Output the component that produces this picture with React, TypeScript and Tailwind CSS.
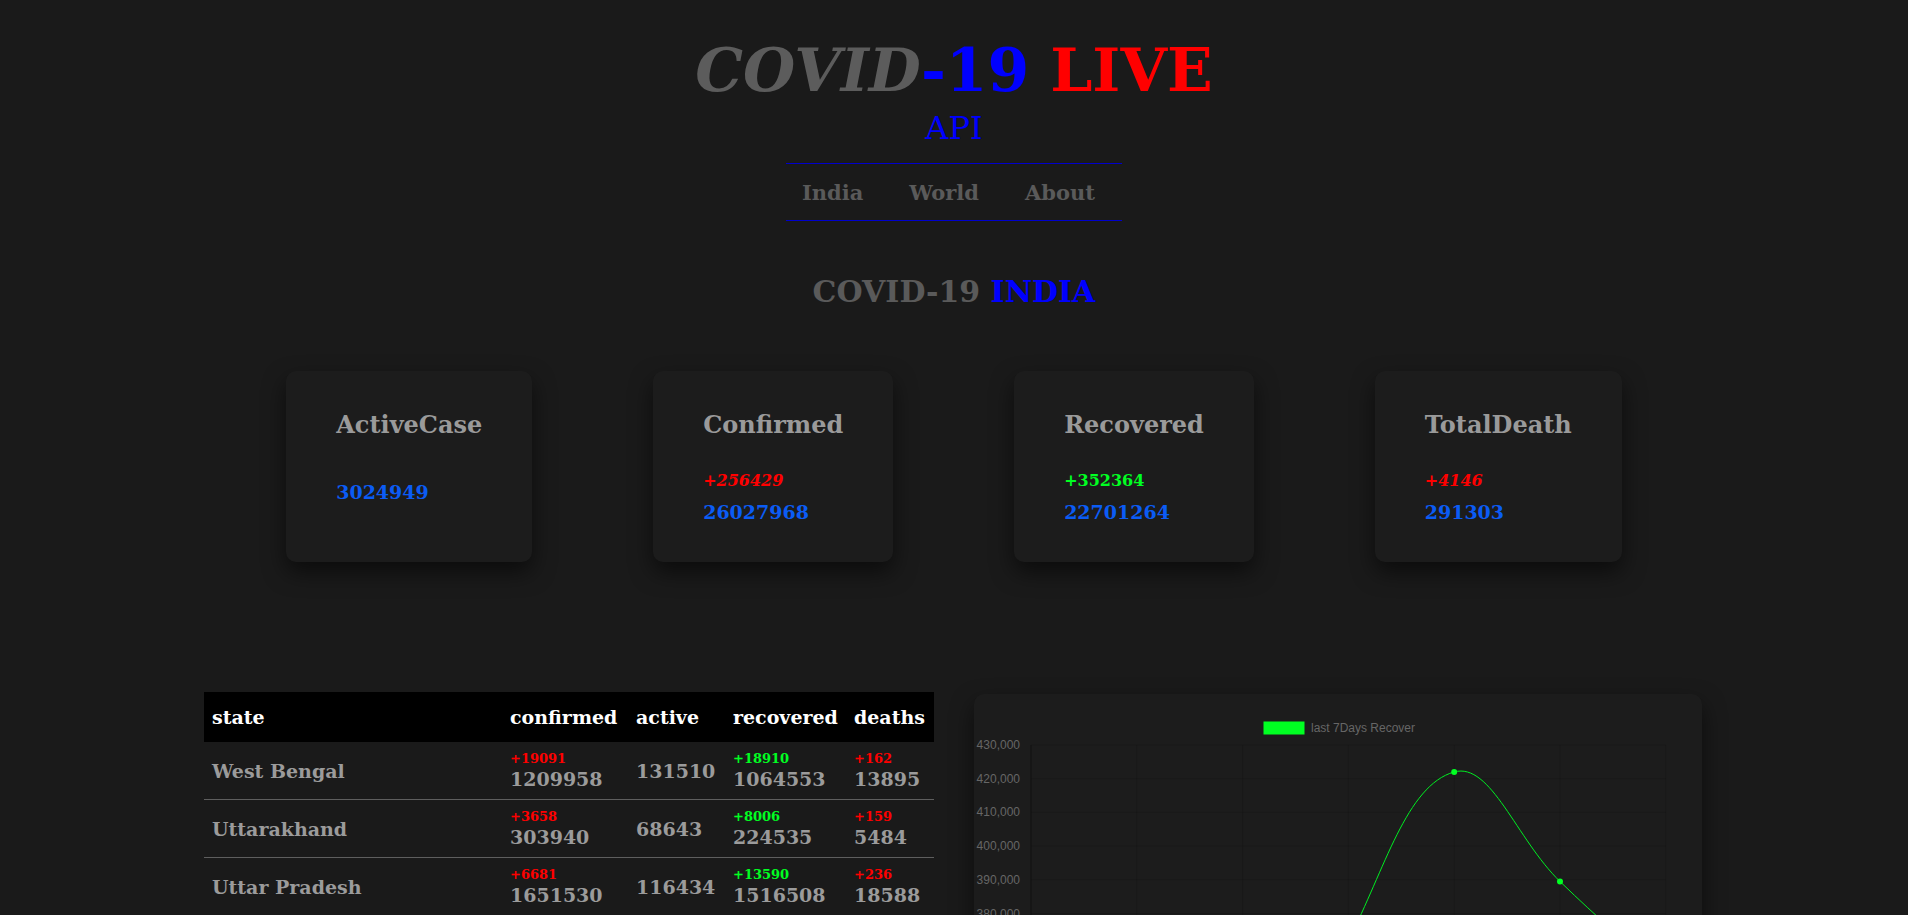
import React from "react";

const cards = [
  { title: "ActiveCase", delta: "", deltaColor: "", total: "3024949" },
  { title: "Confirmed", delta: "+256429", deltaColor: "text-[#ff0000] italic", total: "26027968" },
  { title: "Recovered", delta: "+352364", deltaColor: "text-[#00ff22]", total: "22701264" },
  { title: "TotalDeath", delta: "+4146", deltaColor: "text-[#ff0000] italic", total: "291303" },
];

const rows = [
  { state: "West Bengal", dc: "+19091", c: "1209958", a: "131510", dr: "+18910", r: "1064553", dd: "+162", d: "13895" },
  { state: "Uttarakhand", dc: "+3658", c: "303940", a: "68643", dr: "+8006", r: "224535", dd: "+159", d: "5484" },
  { state: "Uttar Pradesh", dc: "+6681", c: "1651530", a: "116434", dr: "+13590", r: "1516508", dd: "+236", d: "18588" },
  { state: "Tripura", dc: "+412", c: "48723", a: "5108", dr: "+301", r: "43091", dd: "+6", d: "524" },
];

// chart geometry (local to the chart box)
const X0 = 57;
const DX = 105.8;
const Y0 = 51;
const STEP = 33.7; // px per 10,000
const MAX = 430000;
const data = [318000, 326000, 300000, 372000, 422000, 389500, 361000];

type P = { x: number; y: number };

function toY(v: number) {
  return Y0 + ((MAX - v) / 10000) * STEP;
}

// same control point maths as chart.js (tension 0.4)
function buildPath(pts: P[], t = 0.4) {
  const ctrl = pts.map((p1, i) => {
    const p0 = pts[i - 1] ?? p1;
    const p2 = pts[i + 1] ?? p1;
    const d01 = Math.hypot(p1.x - p0.x, p1.y - p0.y);
    const d12 = Math.hypot(p2.x - p1.x, p2.y - p1.y);
    const sum = d01 + d12 || 1;
    const fa = t * (d01 / sum);
    const fb = t * (d12 / sum);
    return {
      prev: { x: p1.x - fa * (p2.x - p0.x), y: p1.y - fa * (p2.y - p0.y) },
      next: { x: p1.x + fb * (p2.x - p0.x), y: p1.y + fb * (p2.y - p0.y) },
    };
  });
  let d = `M ${pts[0].x} ${pts[0].y}`;
  for (let i = 1; i < pts.length; i++) {
    const a = ctrl[i - 1].next;
    const b = ctrl[i].prev;
    d += ` C ${a.x} ${a.y} ${b.x} ${b.y} ${pts[i].x} ${pts[i].y}`;
  }
  return d;
}

function RecoverChart() {
  const pts = data.map((v, i) => ({ x: X0 + i * DX, y: toY(v) }));
  const ticks = Array.from({ length: 14 }, (_, i) => MAX - i * 10000);
  const bottom = toY(300000);
  const days = ["17 May", "18 May", "19 May", "20 May", "21 May", "22 May", "23 May"];
  const font = "'Liberation Sans', Arial, sans-serif";
  return (
    <svg width="728" height="530" className="block">
      <rect x="290" y="28" width="40" height="12" fill="#00ff22" stroke="#00ff22" />
      <text x="337" y="38" fontSize="12" fill="#666" fontFamily={font}>
        last 7Days Recover
      </text>
      {ticks.map((v) => (
        <g key={v}>
          <line x1={X0} x2={X0 + 6 * DX} y1={toY(v)} y2={toY(v)} stroke="rgba(0,0,0,0.12)" />
          <text x="46" y={toY(v) + 4} fontSize="12" fill="#666" textAnchor="end" fontFamily={font}>
            {v.toLocaleString("en-US")}
          </text>
        </g>
      ))}
      {data.map((_, i) => (
        <g key={i}>
          <line x1={X0 + i * DX} x2={X0 + i * DX} y1={Y0} y2={bottom} stroke="rgba(0,0,0,0.12)" />
          <text x={X0 + i * DX} y={bottom + 18} fontSize="12" fill="#666" textAnchor="middle" fontFamily={font}>
            {days[i]}
          </text>
        </g>
      ))}
      <line x1={X0} x2={X0} y1={Y0} y2={bottom} stroke="rgba(0,0,0,0.25)" />
      <path d={buildPath(pts)} fill="none" stroke="#00ee22" strokeWidth="1" />
      {pts.map((p, i) => (
        <circle key={i} cx={p.x} cy={p.y} r="3" fill="#00ff22" />
      ))}
    </svg>
  );
}

export default function App() {
  return (
    <div className="min-h-screen w-full bg-[#1a1a1a] font-['DejaVu_Serif',serif] pb-20">
      {/* header */}
      <div className="flex flex-col items-center pt-[35px]">
        <h1 className="text-[60px] leading-[70px] font-bold">
          <span className="italic text-[#5c5c5c]">COVID</span>
          <span className="text-[#0000ff]">-19</span>
          <span className="text-[#ff0000]"> LIVE</span>
        </h1>
        <p className="mt-[5px] text-[32px] leading-[37px] text-[#0000ff]">API</p>

        <nav className="mt-[16px] w-[336px] border-y border-[#0000cc] pt-[16px] pb-[14px] pl-[16px]">
          <ul className="flex gap-[46px] text-[21px] leading-[26px] font-bold text-[#5a5a5a]">
            <li>India</li>
            <li>World</li>
            <li>About</li>
          </ul>
        </nav>

        <h2 className="mt-[53px] text-[30px] leading-[35px] font-bold text-[#5a5a5a]">
          COVID-19 <span className="text-[#0000ff]">INDIA</span>
        </h2>
      </div>

      {/* cards */}
      <div className="mx-auto mt-[62px] flex w-[70%] justify-between">
        {cards.map((c) => (
          <div
            key={c.title}
            className="h-[191px] rounded-[10px] bg-[#1c1c1c] px-[50px] pt-[40px] shadow-[0_10px_22px_rgba(0,0,0,0.55)]"
          >
            <h3 className="text-[24px] leading-[28px] font-bold text-[#9a9a9a]">{c.title}</h3>
            {c.delta ? (
              <>
                <p className={`mt-[32px] text-[16px] leading-[20px] font-bold ${c.deltaColor}`}>{c.delta}</p>
                <p className="mt-[9px] text-[19px] leading-[24px] font-bold text-[#0b5cf5]">{c.total}</p>
              </>
            ) : (
              <p className="mt-[41px] text-[19px] leading-[24px] font-bold text-[#0b5cf5]">{c.total}</p>
            )}
          </div>
        ))}
      </div>

      {/* table + chart */}
      <div className="mt-[130px] flex items-start justify-center gap-[40px] pr-[2px]">
        <table className="w-[730px] table-fixed border-collapse text-left">
          <colgroup>
            <col className="w-[298px]" />
            <col className="w-[126px]" />
            <col className="w-[97px]" />
            <col className="w-[121px]" />
            <col className="w-[88px]" />
          </colgroup>
          <thead>
            <tr className="bg-black text-white text-[19px] leading-[24px] font-bold">
              <th className="px-2 py-[13px] font-bold">state</th>
              <th className="px-2 py-[13px] font-bold">confirmed</th>
              <th className="px-2 py-[13px] font-bold">active</th>
              <th className="px-2 py-[13px] font-bold">recovered</th>
              <th className="px-2 py-[13px] font-bold">deaths</th>
            </tr>
          </thead>
          <tbody className="text-[#9b9b9b] font-bold">
            {rows.map((r) => (
              <tr key={r.state} className="border-b border-[#5e5e5e]">
                <td className="px-2 pt-[9px] pb-2 text-[19px] leading-[24px] align-middle">{r.state}</td>
                <td className="px-2 pt-[9px] pb-2 align-middle">
                  <div className="text-[13px] leading-[16px] text-[#ff0000]">{r.dc}</div>
                  <div className="text-[19px] leading-[24px]">{r.c}</div>
                </td>
                <td className="px-2 pt-[9px] pb-2 text-[19px] leading-[24px] align-middle">{r.a}</td>
                <td className="px-2 pt-[9px] pb-2 align-middle">
                  <div className="text-[13px] leading-[16px] text-[#00ff22]">{r.dr}</div>
                  <div className="text-[19px] leading-[24px]">{r.r}</div>
                </td>
                <td className="px-2 pt-[9px] pb-2 align-middle">
                  <div className="text-[13px] leading-[16px] text-[#ff0000]">{r.dd}</div>
                  <div className="text-[19px] leading-[24px]">{r.d}</div>
                </td>
              </tr>
            ))}
          </tbody>
        </table>

        <div className="mt-[2px] w-[728px] rounded-[10px] bg-[#1c1c1c] shadow-[0_10px_22px_rgba(0,0,0,0.55)]">
          <RecoverChart />
        </div>
      </div>
    </div>
  );
}
